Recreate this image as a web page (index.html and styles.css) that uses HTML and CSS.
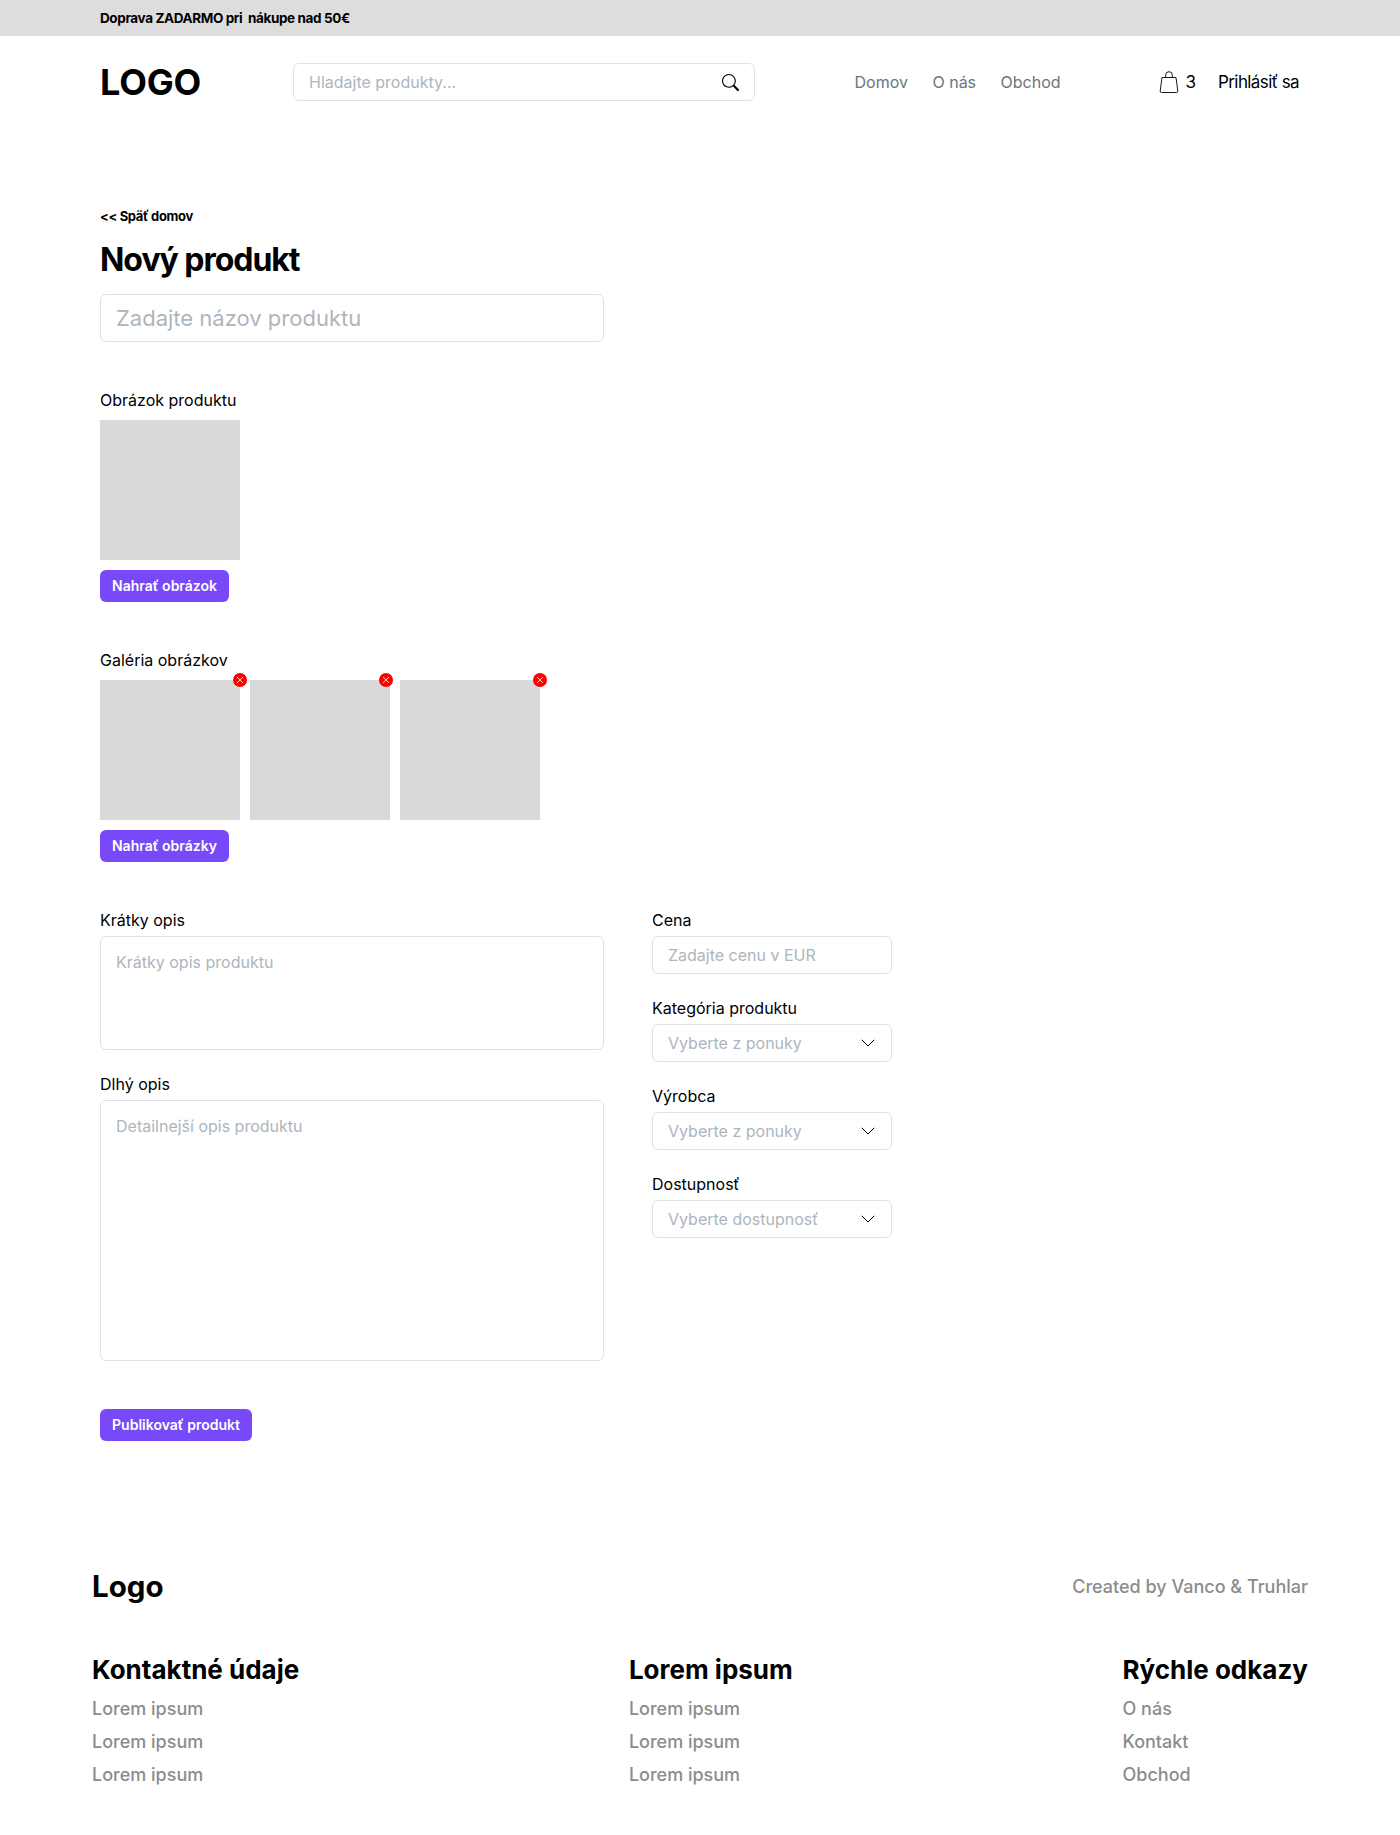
FILE: index.html
```html
<!DOCTYPE html>
<html lang="sk">
<head>
<meta charset="utf-8">
<title>Nový produkt</title>
<link rel="stylesheet" href="styles.css">
</head>
<body>
<div class="promo">Doprava ZADARMO pri&nbsp; nákupe nad 50€</div>
<header class="header">
  <a class="logo">LOGO</a>
  <div class="search"><span>Hladajte produkty...</span>
    <svg class="search-icon" viewBox="0 0 16 16" fill="currentColor"><path d="M11.742 10.344a6.5 6.5 0 1 0-1.397 1.398h-.001c.03.04.062.078.098.115l3.85 3.85a1 1 0 0 0 1.415-1.414l-3.85-3.85a1.007 1.007 0 0 0-.115-.1zM12 6.5a5.5 5.5 0 1 1-11 0 5.5 5.5 0 0 1 11 0z"/></svg>
  </div>
  <nav class="nav"><a>Domov</a><a>O nás</a><a>Obchod</a></nav>
  <div class="account">
    <svg class="bag" viewBox="0 0 20 22" fill="none" stroke="currentColor"><path d="M3 6.500h14L18.800 20q.1 1.500-1.400 1.500H2.600q-1.500 0-1.400-1.500zM6.700 6.500V4a3.300 3.300 0 0 1 6.600 0v2.500"/></svg>
    <span class="count">3</span><a class="login">Prihlásiť sa</a>
  </div>
</header>
<main class="main">
  <a class="back">&lt;&lt; Späť domov</a>
  <h1 class="title">Nový produkt</h1>
  <div class="input input-lg"><span>Zadajte názov produktu</span></div>

  <section class="upload">
    <div class="label">Obrázok produktu</div>
    <div class="thumbs"><div class="thumb"></div></div>
    <button class="btn btn-upload">Nahrať obrázok</button>
  </section>
  <section class="upload">
    <div class="label">Galéria obrázkov</div>
    <div class="thumbs">
      <div class="thumb"><svg class="remove" viewBox="0 0 14 14"><circle cx="7" cy="7" r="7"/><path d="M4 4l6 6M10 4l-6 6"/></svg></div>
      <div class="thumb"><svg class="remove remove-inset" viewBox="0 0 14 14"><circle cx="7" cy="7" r="7"/><path d="M4 4l6 6M10 4l-6 6"/></svg></div>
      <div class="thumb"><svg class="remove" viewBox="0 0 14 14"><circle cx="7" cy="7" r="7"/><path d="M4 4l6 6M10 4l-6 6"/></svg></div>
    </div>
    <button class="btn btn-upload">Nahrať obrázky</button>
  </section>

  <div class="details">
    <div class="col-wide">
      <div class="label">Krátky opis</div>
      <div class="area area-short">Krátky opis produktu</div>
      <div class="label">Dlhý opis</div>
      <div class="area area-long">Detailnejší opis produktu</div>
    </div>
    <div class="col-narrow">
      <div class="label">Cena</div>
      <div class="input"><span>Zadajte cenu v EUR</span></div>
      <div class="label">Kategória produktu</div>
      <div class="input"><span>Vyberte z ponuky</span><svg class="chevron" viewBox="0 0 14 8"><path d="M.8.800 7 7 13.200.800"/></svg></div>
      <div class="label">Výrobca</div>
      <div class="input"><span>Vyberte z ponuky</span><svg class="chevron" viewBox="0 0 14 8"><path d="M.8.800 7 7 13.200.800"/></svg></div>
      <div class="label">Dostupnosť</div>
      <div class="input"><span>Vyberte dostupnosť</span><svg class="chevron" viewBox="0 0 14 8"><path d="M.8.800 7 7 13.200.800"/></svg></div>
    </div>
  </div>
  <button class="btn btn-publish">Publikovať produkt</button>
</main>
<footer class="footer">
  <div class="footer-top"><span class="footer-logo">Logo</span><span class="credit">Created by Vanco &amp; Truhlar</span></div>
  <div class="footer-cols">
    <div class="footer-col"><h2>Kontaktné údaje</h2><a>Lorem ipsum</a><a>Lorem ipsum</a><a>Lorem ipsum</a></div>
    <div class="footer-col"><h2>Lorem ipsum</h2><a>Lorem ipsum</a><a>Lorem ipsum</a><a>Lorem ipsum</a></div>
    <div class="footer-col"><h2>Rýchle odkazy</h2><a>O nás</a><a>Kontakt</a><a>Obchod</a></div>
  </div>
</footer>
</body>
</html>
```
FILE: styles.css
```css
* { box-sizing: border-box; }
body { margin: 0; background: #fff; color: #000; font-family: Inter, "Liberation Sans", sans-serif; font-size: 16px; line-height: 24px; }
h1, h2 { margin: 0; }
.promo { height: 36px; padding-left: 100px; background: #ddd; font-size: 13.5px; font-weight: 700; line-height: 36px; letter-spacing: -0.38px; white-space: pre; }
.header { display: flex; align-items: center; height: 92px; padding: 0 100px; }
.logo { width: 193px; font-size: 36px; font-weight: 700; letter-spacing: -0.2px; }
.search { display: flex; align-items: center; justify-content: space-between; width: 462px; height: 38px; padding: 0 15px; border: 1px solid #dee2e6; border-radius: 6px; color: #adb5bd; }
.search-icon { width: 17px; height: 17px; color: #000; }
.nav { display: flex; gap: 24.5px; margin-left: 99.5px; color: #6c757d; }
.account { display: flex; align-items: center; margin-left: auto; margin-right: 1px; }
.bag { width: 20px; height: 22px; margin-right: 7px; stroke-width: .9; }
.count { margin-right: 22px; font-size: 17px; }
.login { font-size: 17px; letter-spacing: -0.6px; }
.main { display: flex; flex-direction: column; align-items: flex-start; padding: 76px 100px 0; }
.back { font-size: 13px; font-weight: 700; letter-spacing: -0.35px; }
.title { margin-top: 12px; font-size: 32px; font-weight: 700; line-height: 40px; letter-spacing: -1.03px; }
.input { display: flex; align-items: center; justify-content: space-between; width: 240px; height: 38px; padding: 0 15px; border: 1px solid #dee2e6; border-radius: 6px; color: #adb5bd; }
.input-lg { width: 504px; height: 48px; margin-top: 14px; font-size: 22px; }
.upload { height: 260px; padding-top: 46px; }
.label { height: 24px; margin-bottom: 4px; }
.thumbs { display: flex; gap: 10px; }
.upload .label { margin-bottom: 8px; }
.thumb { position: relative; width: 140px; height: 140px; background: #d9d9d9; }
.remove { position: absolute; top: -7px; right: -7px; width: 14px; height: 14px; fill: #f00; }
.remove-inset { right: -3px; }
.remove path { stroke: #fff; stroke-width: .8; }
.btn { display: flex; align-items: center; justify-content: center; height: 32px; padding: 0 0 2px; border: 0; border-radius: 6px; background: #7749f8; color: #fff; font: 600 14px/21px Inter, "Liberation Sans", sans-serif; }
.btn-upload { width: 129px; margin-top: 10px; }
.btn-publish { width: 152px; margin-top: 48px; }
.details { display: flex; gap: 48px; padding-top: 46px; }
.area { width: 504px; padding: 13px 15px; border: 1px solid #dee2e6; border-radius: 6px; color: #adb5bd; }
.area-short { height: 114px; margin-bottom: 22px; }
.area-long { height: 261px; }
.col-narrow .input { margin-bottom: 22px; }
.chevron { width: 14px; height: 8px; margin-right: 1px; fill: none; stroke: #000; }
.footer { padding: 126px 92px 0; font-size: 18px; font-weight: 500; color: #8c8c8c; }
.footer-top { display: flex; align-items: center; justify-content: space-between; height: 40px; }
.footer-logo { padding-bottom: 2px; color: #000; font-size: 29.5px; font-weight: 700; }
.footer-cols { display: flex; justify-content: space-between; margin-top: 45px; }
.footer-col { display: flex; flex-direction: column; }
.footer-col h2 { margin-bottom: 4px; color: #000; font-size: 26px; line-height: 36px; font-weight: 700; }
.footer-col a { line-height: 33px; }
```
